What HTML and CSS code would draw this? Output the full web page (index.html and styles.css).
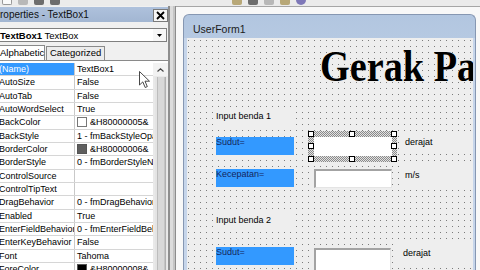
FILE: index.html
```html
<!DOCTYPE html>
<html>
<head>
<meta charset="utf-8">
<link rel="stylesheet" href="styles.css">
</head>
<body>
<div class="toolbar">
  <span class="tb-icon w"></span><span class="tb-icon"></span><span class="tb-icon d"></span><span class="tb-icon d"></span>
  <span class="tb-gap"></span>
  <span class="tb-icon y"></span><span class="tb-icon d"></span><span class="tb-icon"></span><span class="tb-icon y"></span>
  <span class="tb-icon p"></span>
</div>
<div class="main">
  <div class="props">
    <div class="props-title">
      <span>roperties - TextBox1</span>
      <span class="close"><svg width="9" height="9" viewBox="0 0 9 9"><path d="M1 1L8 8M8 1L1 8" stroke="#000" stroke-width="1.8"/></svg></span>
    </div>
    <div class="combo">
      <span class="combo-text"><b>TextBox1</b> TextBox</span>
      <span class="combo-btn"><svg width="5" height="3" viewBox="0 0 5 3"><path d="M0 0H5L2.5 3Z" fill="#000"/></svg></span>
    </div>
    <div class="tabs">
      <span class="tab active">Alphabetic</span>
      <span class="tab">Categorized</span>
    </div>
    <div class="grid">
      <div class="rows">
        <div class="row sel"><span class="name">(Name)</span><span class="val">TextBox1</span></div>
        <div class="row"><span class="name">AutoSize</span><span class="val">False</span></div>
        <div class="row"><span class="name">AutoTab</span><span class="val">False</span></div>
        <div class="row"><span class="name">AutoWordSelect</span><span class="val">True</span></div>
        <div class="row"><span class="name">BackColor</span><span class="val"><i class="swatch white"></i>&amp;H80000005&amp;</span></div>
        <div class="row"><span class="name">BackStyle</span><span class="val">1 - fmBackStyleOpaque</span></div>
        <div class="row"><span class="name">BorderColor</span><span class="val"><i class="swatch gray"></i>&amp;H80000006&amp;</span></div>
        <div class="row"><span class="name">BorderStyle</span><span class="val">0 - fmBorderStyleNone</span></div>
        <div class="row"><span class="name">ControlSource</span><span class="val"></span></div>
        <div class="row"><span class="name">ControlTipText</span><span class="val"></span></div>
        <div class="row"><span class="name">DragBehavior</span><span class="val">0 - fmDragBehaviorDisabled</span></div>
        <div class="row"><span class="name">Enabled</span><span class="val">True</span></div>
        <div class="row"><span class="name">EnterFieldBehavior</span><span class="val">0 - fmEnterFieldBehaviorSelectAll</span></div>
        <div class="row"><span class="name">EnterKeyBehavior</span><span class="val">False</span></div>
        <div class="row"><span class="name">Font</span><span class="val">Tahoma</span></div>
        <div class="row"><span class="name">ForeColor</span><span class="val"><i class="swatch black"></i>&amp;H80000008&amp;</span></div>
      </div>
      <div class="scroll">
        <div class="scroll-up"><svg width="7" height="4" viewBox="0 0 7 4"><path d="M0.5 3.5L3.5 0.8L6.5 3.5" stroke="#444" stroke-width="1.2" fill="none"/></svg></div>
        <div class="scroll-thumb"></div>
      </div>
    </div>
  </div>
  <div class="split"></div>
  <div class="designer">
    <div class="form">
      <div class="form-title">UserForm1</div>
      <div class="form-body">
        <div class="heading">Gerak Parabola</div>

        <div class="lbl" style="left:27px;top:70px;width:78px">Input benda 1</div>
        <div class="lbl blue" style="left:29px;top:99px">Sudut=</div>
        <div class="selection" style="left:121px;top:93px">
          <div class="inner"></div>
          <i class="handle" style="left:0;top:0"></i>
          <i class="handle" style="left:41px;top:0"></i>
          <i class="handle" style="left:83px;top:0"></i>
          <i class="handle" style="left:0;top:12px"></i>
          <i class="handle" style="left:83px;top:12px"></i>
          <i class="handle" style="left:0;top:25px"></i>
          <i class="handle" style="left:41px;top:25px"></i>
          <i class="handle" style="left:83px;top:25px"></i>
        </div>
        <div class="lbl unit" style="left:213px;top:95px">derajat</div>

        <div class="lbl blue" style="left:29px;top:131px">Kecepatan=</div>
        <div class="textbox" style="left:127px;top:131px"></div>
        <div class="lbl unit" style="left:213px;top:128px">m/s</div>

        <div class="lbl" style="left:27px;top:174px;width:78px">Input benda 2</div>
        <div class="lbl blue" style="left:29px;top:209px">Sudut=</div>
        <div class="textbox tall" style="left:127px;top:210px"></div>
        <div class="lbl unit" style="left:211px;top:206px">derajat</div>
      </div>
    </div>
  </div>
</div>
<svg class="cursor" width="12" height="18" viewBox="0 0 12 18"><path d="M0.5 0.5V14L3.8 10.9L6.2 16.5L8.3 15.6L6 10.2H10.5Z" fill="#fff" stroke="#333" stroke-width="0.9" stroke-linejoin="round"/></svg>
</body>
</html>
```

FILE: styles.css
```css
* { box-sizing: border-box; }
html, body { margin: 0; padding: 0; }
body {
  width: 480px;
  height: 270px;
  overflow: hidden;
  position: relative;
  background: #f0f0f0;
  font-family: "Liberation Sans", Arial, sans-serif;
  font-size: 9px;
  color: #000;
}

/* top toolbar remnant */
.toolbar {
  height: 6px;
  background: #ebebeb;
  display: flex;
  align-items: flex-start;
  gap: 6px;
  padding-left: 2px;
}
.tb-icon { width: 10px; height: 5px; background: #b8b8b8; border-radius: 0 0 2px 2px; }
.tb-icon.w { background: #fafafa; border: 1px solid #999; border-top: none; }
.tb-icon.d { background: #6d6d6d; }
.tb-icon.y { background: #b8a878; }
.tb-icon.p { background: #7e78b8; border-radius: 0 0 5px 5px; }
.tb-gap { width: 160px; }

.main { display: flex; height: 264px; }

/* properties window */
.props {
  width: 170px;
  display: flex;
  flex-direction: column;
  border-right: 2px solid #8e8e8e;
  background: #f0f0f0;
}
.props-title {
  margin-top: 1px;
  height: 15px;
  background: linear-gradient(#aec1dc, #a2b6d2);
  display: flex;
  align-items: center;
  justify-content: space-between;
  font-size: 10px;
  color: #111;
}
.close {
  width: 15px;
  height: 13px;
  margin-top: 2px;
  background: #f6f6f6;
  border: 1px solid #7a7a7a;
  display: flex;
  align-items: center;
  justify-content: center;
}
.combo {
  margin-top: 6px;
  margin-right: 1px;
  height: 14px;
  background: #fff;
  border: 1px solid #7f7f7f;
  border-left: none;
  display: flex;
  align-items: center;
}
.combo-text { white-space: nowrap; font-size: 9.5px; }
.combo-btn {
  margin-left: auto;
  width: 13px;
  height: 12px;
  display: flex;
  align-items: center;
  justify-content: center;
  background: #f7f7f7;
}
.tabs {
  margin-top: 3px;
  height: 15px;
  display: flex;
  align-items: flex-end;
}
.tab {
  height: 14px;
  line-height: 12px;
  padding: 0 3px;
  border: 1px solid #8a8a8a;
  border-bottom: none;
  background: #ececec;
  margin-left: 1px;
  font-size: 9.5px;
}
.tab.active {
  height: 15px;
  width: 45px;
  margin-left: 0;
  padding-left: 0;
  line-height: 14px;
  border-left: none;
  background: #fff;
}
.grid {
  flex: 1;
  display: flex;
  border-top: 1px solid #8a8a8a;
  padding-top: 2px;
  background: #fff;
  overflow: hidden;
}
.rows { width: 153px; }
.row {
  display: flex;
  height: 13.33px;
  border-bottom: 1px solid #d6d6d6;
  line-height: 12px;
}
.name {
  width: 75px;
  flex: none;
  border-right: 1px solid #c9c9c9;
  white-space: nowrap;
  overflow: hidden;
  text-indent: -1px;
}
.row.sel .name { background: #3399ff; color: #fff; }
.val {
  flex: 1;
  padding-left: 2px;
  white-space: nowrap;
  overflow: hidden;
  display: flex;
  align-items: center;
  gap: 3px;
}
.swatch {
  width: 10px;
  height: 10px;
  flex: none;
  border: 1px solid #555;
}
.swatch.white { background: #fff; border-color: #777; }
.swatch.gray { background: #5e5e5e; }
.swatch.black { background: #000; }

.scroll {
  width: 15px;
  display: flex;
  flex-direction: column;
  background: #e9e9e9;
}
.scroll-up {
  height: 13px;
  display: flex;
  align-items: center;
  justify-content: center;
  background: #f2f2f2;
}
.scroll-thumb {
  flex: 1;
  margin: 1px 1px 0 2px;
  background: linear-gradient(90deg, #e4e4e4 0 2px, #bdbdbd 2px 3px, #d8d8d8 3px 9px, #c4c4c4 9px 10px, #b0b0b0 10px 11px, #e6e6e6 11px);
}

.split {
  width: 6px;
  background: linear-gradient(90deg, #dcdcdc 0 3px, #c4c4c4 3px);
  border-right: 1px solid #8c8c8c;
}

/* designer */
.designer {
  flex: 1;
  display: flex;
  flex-direction: column;
  background: #f8f8f8;
  border-top: 1px solid #a6a6a6;
  padding: 7px 4px 0 7px;
}
.form {
  flex: 1;
  display: flex;
  flex-direction: column;
  border: 1px solid #8697b2;
  border-bottom: none;
  border-radius: 6px 6px 0 0;
  background: linear-gradient(#b2c6e0, #c9d8eb 55%, #dbe5f2);
  overflow: hidden;
}
.form-title {
  height: 23px;
  padding: 5px 0 0 9px;
  line-height: 18px;
  font-size: 10.5px;
  color: #1b1b1b;
}
.form-body {
  flex: 1;
  position: relative;
  overflow: hidden;
  border-left: 3px solid #c6d5ea;
  border-right: 2px solid #c6d5ea;
  background-color: #eeeeee;
  background-image: conic-gradient(at 1px 1px, transparent 75%, #7b7b7b 0);
  background-size: 6px 6px;
  background-position: 1px 2px;
}
.heading {
  position: absolute;
  left: 133px;
  top: 6px;
  font-family: "Liberation Serif", "Times New Roman", serif;
  font-weight: bold;
  font-size: 45px;
  line-height: 45px;
  white-space: nowrap;
  transform: scaleX(0.85);
  transform-origin: left top;
}
.lbl {
  position: absolute;
  height: 17px;
  line-height: 17px;
  padding-left: 2px;
  background: #eeeeee;
  white-space: nowrap;
}
.lbl.blue {
  width: 78px;
  height: 18px;
  line-height: 11px;
  padding-left: 0;
  background: #3399ff;
  color: #13265c;
}
.lbl.unit {
  width: 80px;
  height: 19px;
  line-height: 19px;
  padding-left: 5px;
}
.selection {
  position: absolute;
  width: 89px;
  height: 31px;
  background: conic-gradient(#8a8a8a 25%, #e2e2e2 0 50%, #8a8a8a 0 75%, #e2e2e2 0);
  background-size: 2px 2px;
}
.selection .inner {
  position: absolute;
  left: 6px;
  top: 6px;
  right: 5px;
  bottom: 6px;
  background: #fff;
}
.handle {
  position: absolute;
  width: 6px;
  height: 6px;
  background: #fff;
  border: 1px solid #000;
}
.textbox {
  position: absolute;
  width: 78px;
  height: 19px;
  background: #fff;
  border-top: 2px solid #a3a3a3;
  border-left: 2px solid #a3a3a3;
  border-right: 1px solid #e4e4e4;
  border-bottom: 1px solid #e4e4e4;
}
.textbox.tall { height: 24px; width: 77px; }

.cursor {
  position: absolute;
  left: 139px;
  top: 71px;
}
```
